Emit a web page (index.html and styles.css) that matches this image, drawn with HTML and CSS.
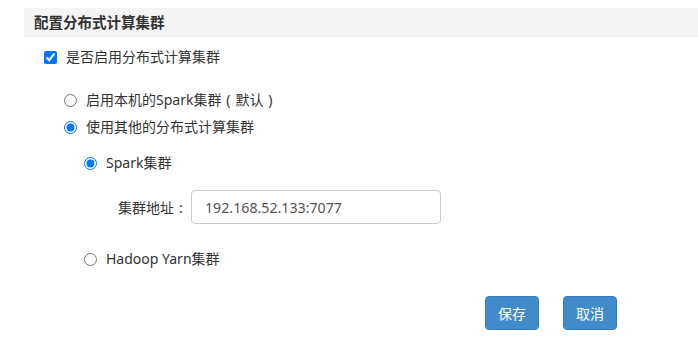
FILE: index.html
```html
<!DOCTYPE html>
<html lang="zh-CN">
<head>
  <meta charset="UTF-8">
  <meta name="viewport" content="width=device-width, initial-scale=1.0">
  <title>配置分布式计算集群</title>
  <link rel="stylesheet" href="styles.css">
</head>
<body>
  <div class="panel">
    <div class="panel-title">配置分布式计算集群</div>

    <div class="panel-body">
      <!-- 是否启用 -->
      <label class="row check-row">
        <input type="checkbox" checked>
        <span>是否启用分布式计算集群</span>
      </label>

      <div class="group">
        <label class="row first">
          <input type="radio" name="mode">
          <span>启用本机的Spark集群<span class="punct">(</span>默认<span class="punct">)</span></span>
        </label>
        <label class="row second">
          <input type="radio" name="mode" checked>
          <span>使用其他的分布式计算集群</span>
        </label>

        <div class="group">
          <label class="row spark">
            <input type="radio" name="cluster" checked>
            <span>Spark集群</span>
          </label>
          <div class="field">
            <span class="field-label">集群地址<span class="punct">:</span></span>
            <input class="field-input" type="text" value="192.168.52.133:7077">
          </div>
          <label class="row hadoop">
            <input type="radio" name="cluster">
            <span>Hadoop Yarn集群</span>
          </label>
        </div>
      </div>

      <div class="actions">
        <button class="btn">保存</button>
        <button class="btn">取消</button>
      </div>
    </div>
  </div>
</body>
</html>
```

FILE: styles.css
```css
/* General */
body {
  margin: 0;
  font-family: "Noto Sans", "Noto Sans CJK SC", sans-serif;
  font-size: 14px;
  color: #333;
  background: #fff;
}

/* full-width punctuation, centered in its em box */
.punct {
  display: inline-block;
  width: 1em;
  text-align: center;
}

/* Panel header */
.panel {
  padding-top: 8px;
}

.panel-title {
  margin-left: 24px;
  height: 28px;
  line-height: 28px;
  padding-left: 10px;
  background: #f5f5f5;
  border-bottom: 1px solid #f0f0f0;
  font-weight: bold;
  font-size: 14.5px;
}

.panel-body {
  padding-left: 43px;
}

/* Option rows */
.row {
  display: flex;
  align-items: center;
  height: 20px;
  line-height: 20px;
}

.row input {
  margin: 0 9px 0 1px;
  width: 13px;
  height: 13px;
}

.check-row {
  margin-top: 10px;
}

.group {
  padding-left: 20px;
}

.first {
  margin-top: 23px;
}

.second {
  margin-top: 7px;
}

.spark {
  margin-top: 16px;
}

.hadoop {
  margin-top: 25px;
}

/* Address field */
.field {
  display: flex;
  align-items: center;
  margin-top: 17px;
  padding-left: 35px;
}

.field-label {
  width: 73px;
}

.field-input {
  box-sizing: border-box;
  width: 250px;
  height: 34px;
  padding: 0 13px;
  border: 1px solid #ccc;
  border-radius: 4px;
  font-family: inherit;
  font-size: 14.2px;
  color: #555;
  outline: none;
}

/* Buttons */
.actions {
  display: flex;
  gap: 24px;
  margin-top: 27px;
  padding-left: 442px;
}

.btn {
  width: 54px;
  height: 34px;
  padding: 0;
  border: 1px solid #357ebd;
  border-radius: 4px;
  background: #428bca;
  color: #fff;
  font-family: inherit;
  font-size: 14px;
  cursor: pointer;
}
```
